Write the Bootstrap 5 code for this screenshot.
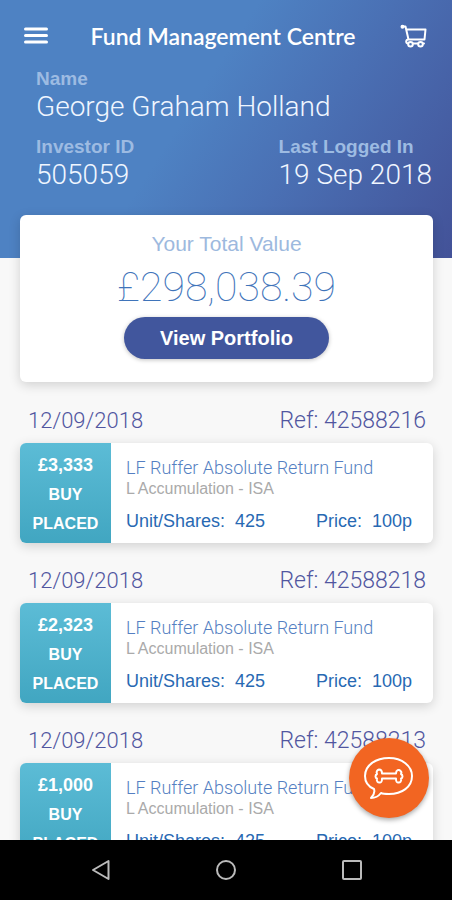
<!DOCTYPE html>
<html lang="en">
<head>
<meta charset="utf-8">
<meta name="viewport" content="width=device-width, initial-scale=1">
<title>Fund Management Centre</title>
<link href="https://cdn.jsdelivr.net/npm/bootstrap@5.3.0/dist/css/bootstrap.min.css" rel="stylesheet">
<style>
  body { font-family: "Liberation Sans", Arial, sans-serif; background: #f8f8f8; }
  .light-face { font-family: Roboto, "Liberation Sans", sans-serif; font-weight: 300; }
  .hero { background: linear-gradient(123deg, #4e82c3 0%, #4e82c3 42%, #4a70b4 64%, #435298 100%); padding: 20px 20px 67px; }
  .hero-title { font-family: Lato, sans-serif; font-weight: 600; font-size: 23px; line-height: 32px; }
  .hero-label { color: #9dbbe2; font-weight: 700; font-size: 19px; line-height: 24px; }
  .hero-value { color: #f0f6ff; font-size: 28px; line-height: 32px; }
  .hero-details { padding: 15px 0 0 16px; row-gap: 12px; }
  .icon-btn { line-height: 0; }
  .panel { border-radius: 6px; background: #fff; box-shadow: 0 3px 12px rgba(0, 0, 0, .16); overflow: hidden; }
  .total-panel { margin: -43px 19px 0 20px; padding: 16px 16px 23px; position: relative; }
  .total-label { color: #9db9de; font-size: 21px; line-height: 26px; }
  .total-value { color: #3f74ba; font-size: 41px; line-height: 60px; font-weight: 100; }
  .btn-portfolio { background: #41569d; color: #fff; font-weight: 700; font-size: 20px; line-height: 26px; padding: 8px 36px; box-shadow: 0 1px 4px rgba(0, 0, 0, .25); }
  .btn-portfolio:hover { background: #364a8d; color: #fff; }
  .deals { padding: 25px 19px 0 20px; }
  .deal { margin-bottom: 24px; }
  .deal-head { color: #5156a0; font-size: 23px; line-height: 28px; padding: 0 7px 8px 8px; }
  .deal-date { font-size: 22px; }
  .deal-state { width: 91px; background: linear-gradient(#5cbcd6, #41a6c1); color: #fff; font-weight: 700; font-size: 16px; line-height: 29px; padding: 8px 0 5px; }
  .deal-amount { font-size: 18px; }
  .deal-body { padding: 14px 21px 8px 15px; }
  .deal-name { color: #557fc2; font-size: 18px; line-height: 22px; }
  .deal-type { color: #aaa; font-size: 16px; line-height: 20px; }
  .deal-figures { color: #2869b3; font-size: 18px; line-height: 20px; padding-top: 12px; }
  .chat-btn { position: absolute; right: 23px; bottom: 22px; width: 80px; height: 80px; background: #f26522; box-shadow: 0 2px 5px rgba(0, 0, 0, .35); }
  .system-bar { background: #000; height: 60px; padding: 0 88px; }
</style>
<script src="https://cdn.jsdelivr.net/npm/bootstrap@5.3.0/dist/js/bootstrap.bundle.min.js" defer></script>
</head>
<body>
<div class="vh-100 d-flex flex-column overflow-hidden">
  <div class="flex-grow-1 overflow-hidden position-relative">
    <header class="hero text-white">
      <div class="d-flex align-items-center justify-content-between">
        <button class="btn p-0 border-0 icon-btn" type="button" aria-label="Menu">
          <svg width="32" height="24" viewBox="0 0 32 24" stroke="#fff" stroke-width="3" stroke-linecap="round"><path d="M5.500 5H26.500M5.500 11.500H26.500M5.500 18H26.500"/></svg>
        </button>
        <h1 class="hero-title mb-0">Fund Management Centre</h1>
        <button class="btn p-0 border-0 icon-btn" type="button" aria-label="Basket">
          <svg width="38" height="28" viewBox="0 0 38 28" fill="none" stroke="#fff" stroke-width="2" stroke-linecap="round" stroke-linejoin="round"><path d="M8 4.500H11.500L14.500 17.500H30.500L31.500 7.500H12.300M14.500 17.500C11.500 17.500 11.500 21.500 14 21.500H30"/><circle cx="16.500" cy="22.300" r="2.300" fill="#4b75b8"/><circle cx="26.500" cy="22.300" r="2.300" fill="#4b75b8"/><circle cx="8.500" cy="4.800" r="1" fill="#fff"/></svg>
        </button>
      </div>
      <dl class="hero-details d-flex flex-wrap justify-content-between mb-0">
        <div class="w-100"><dt class="hero-label">Name</dt><dd class="hero-value light-face mb-0">George Graham Holland</dd></div>
        <div><dt class="hero-label">Investor ID</dt><dd class="hero-value light-face mb-0">505059</dd></div>
        <div><dt class="hero-label">Last Logged In</dt><dd class="hero-value light-face mb-0">19 Sep 2018</dd></div>
      </dl>
    </header>

    <section class="panel total-panel text-center">
      <h2 class="total-label mb-0">Your Total Value</h2>
      <div class="total-value light-face">£298,038.39</div>
      <button class="btn btn-portfolio rounded-pill border-0" type="button">View Portfolio</button>
    </section>

    <main class="deals">
      <article class="deal">
        <div class="deal-head light-face d-flex justify-content-between"><span class="deal-date">12/09/2018</span><span>Ref: 42588216</span></div>
        <div class="panel d-flex">
          <div class="deal-state flex-shrink-0 text-center"><div class="deal-amount">£3,333</div><div>BUY</div><div>PLACED</div></div>
          <div class="deal-body flex-grow-1">
            <div class="deal-name light-face text-nowrap">LF Ruffer Absolute Return Fund</div>
            <div class="deal-type">L Accumulation - ISA</div>
            <div class="deal-figures d-flex justify-content-between"><span>Unit/Shares:&nbsp; 425</span><span>Price:&nbsp; 100p</span></div>
          </div>
        </div>
      </article>
      <article class="deal">
        <div class="deal-head light-face d-flex justify-content-between"><span class="deal-date">12/09/2018</span><span>Ref: 42588218</span></div>
        <div class="panel d-flex">
          <div class="deal-state flex-shrink-0 text-center"><div class="deal-amount">£2,323</div><div>BUY</div><div>PLACED</div></div>
          <div class="deal-body flex-grow-1">
            <div class="deal-name light-face text-nowrap">LF Ruffer Absolute Return Fund</div>
            <div class="deal-type">L Accumulation - ISA</div>
            <div class="deal-figures d-flex justify-content-between"><span>Unit/Shares:&nbsp; 425</span><span>Price:&nbsp; 100p</span></div>
          </div>
        </div>
      </article>
      <article class="deal">
        <div class="deal-head light-face d-flex justify-content-between"><span class="deal-date">12/09/2018</span><span>Ref: 42588213</span></div>
        <div class="panel d-flex">
          <div class="deal-state flex-shrink-0 text-center"><div class="deal-amount">£1,000</div><div>BUY</div><div>PLACED</div></div>
          <div class="deal-body flex-grow-1">
            <div class="deal-name light-face text-nowrap">LF Ruffer Absolute Return Fund</div>
            <div class="deal-type">L Accumulation - ISA</div>
            <div class="deal-figures d-flex justify-content-between"><span>Unit/Shares:&nbsp; 425</span><span>Price:&nbsp; 100p</span></div>
          </div>
        </div>
      </article>
    </main>

    <button class="chat-btn btn rounded-circle border-0 p-0" type="button" aria-label="Chat">
      <svg width="80" height="80" viewBox="0 0 80 80" fill="none" stroke="#fff" stroke-width="2" stroke-linejoin="round" stroke-linecap="round">
        <path d="M25 51C18 48 16 43 16 38C16 27 27 20 40 20C53 20 63 28 63 38C63 49 53 56 40 56C37 56 34 56 32 55C29 59 26 60 22 60C25 57 26 54 25 51Z"/>
        <path d="M33 35.500H47C47 32 50 31 51.500 33C53 34 52.500 35 52 36C54 37 54 40 52 40.500C53 43 51 45 49 44.500C47 44 47 43 47 40.500H33C33 43 33 44 31 44.500C29 45 27 43 28 40.500C26 40 26 37 28 36C27 34 28 32 30 31.500C32 31.500 33 33 33 35.500Z"/>
      </svg>
    </button>
  </div>

  <nav class="system-bar flex-shrink-0 d-flex align-items-center justify-content-between" aria-label="System">
    <button class="btn p-0 border-0 icon-btn" type="button" aria-label="Back"><svg width="24" height="24" viewBox="0 0 24 24" fill="none" stroke="#bbb" stroke-width="2" stroke-linejoin="round"><path d="M20.500 3V21L5 12Z"/></svg></button>
    <button class="btn p-0 border-0 icon-btn" type="button" aria-label="Home"><svg width="24" height="24" viewBox="0 0 24 24" fill="none" stroke="#bbb" stroke-width="2"><circle cx="12" cy="12" r="9"/></svg></button>
    <button class="btn p-0 border-0 icon-btn" type="button" aria-label="Recent apps"><svg width="24" height="24" viewBox="0 0 24 24" fill="none" stroke="#bbb" stroke-width="2"><rect x="3" y="3" width="18" height="18" rx="1"/></svg></button>
  </nav>
</div>
</body>
</html>
